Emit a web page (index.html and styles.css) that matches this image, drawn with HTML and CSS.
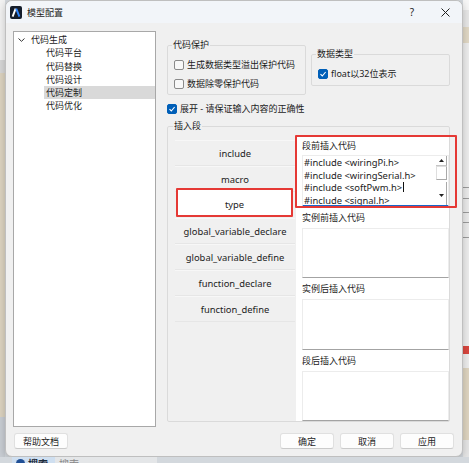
FILE: index.html
```html
<!DOCTYPE html>
<html lang="zh-CN">
<head>
  <meta charset="UTF-8">
  <meta name="viewport" content="width=device-width, initial-scale=1.0">
  <title>模型配置</title>
  <link rel="stylesheet" href="styles.css">
</head>
<body>
  <div class="dialog">
    <!-- Window title bar -->
    <div class="titlebar">
      <svg class="app-icon" width="12" height="13" viewBox="0 0 12 13">
        <rect width="12" height="13" rx="2" fill="#141c2a"/>
        <path d="M2.6 10.6 L5.6 2.6" stroke="#ffffff" stroke-width="1.9" fill="none"/>
        <path d="M6.2 2.6 L9.4 10.6" stroke="#2f86ff" stroke-width="1.9" fill="none"/>
      </svg>
      <span class="title">模型配置</span>
      <span class="tb-btn help">?</span>
      <span class="tb-btn">
        <svg width="9" height="9" viewBox="0 0 9 9">
          <path d="M0.5 0.5 L8.5 8.5 M8.5 0.5 L0.5 8.5" stroke="#1f1f1f" stroke-width="1" fill="none"/>
        </svg>
      </span>
    </div>

    <div class="content">
      <!-- Settings tree -->
      <div class="tree">
        <div class="tree-row">
          <svg class="chevron" width="7" height="4" viewBox="0 0 7 4">
            <path d="M0.5 0.5 L3.5 3.3 L6.5 0.5" stroke="#333" stroke-width="1" fill="none"/>
          </svg>
          代码生成
        </div>
        <div class="tree-row child">代码平台</div>
        <div class="tree-row child">代码替换</div>
        <div class="tree-row child">代码设计</div>
        <div class="tree-row child selected">代码定制</div>
        <div class="tree-row child">代码优化</div>
      </div>

      <div class="main">
        <div class="top-groups">
          <fieldset class="group">
            <legend>代码保护</legend>
            <label class="check-row"><span class="cb"></span>生成数据类型溢出保护代码</label>
            <label class="check-row"><span class="cb"></span>数据除零保护代码</label>
          </fieldset>
          <fieldset class="group group-type">
            <legend>数据类型</legend>
            <label class="check-row">
              <span class="cb on"><svg width="8" height="8" viewBox="0 0 8 8"><path d="M1.5 4.2 L3.3 6 L6.6 2" stroke="#fff" stroke-width="1.1" fill="none"/></svg></span>float以32位表示
            </label>
          </fieldset>
        </div>

        <label class="check-row expand">
          <span class="cb on"><svg width="8" height="8" viewBox="0 0 8 8"><path d="M1.5 4.2 L3.3 6 L6.6 2" stroke="#fff" stroke-width="1.1" fill="none"/></svg></span>展开 - 请保证输入内容的正确性
        </label>

        <fieldset class="group insert">
          <legend>插入段</legend>
          <div class="insert-body">
            <div class="seg-list">
              <div class="seg">include</div>
              <div class="seg">macro</div>
              <div class="seg current">type</div>
              <div class="seg">global_variable_declare</div>
              <div class="seg">global_variable_define</div>
              <div class="seg">function_declare</div>
              <div class="seg">function_define</div>
            </div>

            <div class="code-pane">
              <div class="pane-label first">段前插入代码</div>
              <div class="code-box active">
                <div class="code-lines">
                  <div>#include &lt;wiringPi.h&gt;</div>
                  <div>#include &lt;wiringSerial.h&gt;</div>
                  <div>#include &lt;softPwm.h&gt;<span class="caret"></span></div>
                  <div>#include &lt;signal.h&gt;</div>
                </div>
                <div class="sb">
                  <div class="sb-up"><svg width="5" height="3" viewBox="0 0 5 3"><path d="M0 3 L2.5 0 L5 3Z" fill="#222"/></svg></div>
                  <div class="sb-thumb"></div>
                  <div class="sb-track"></div>
                  <div class="sb-down"><svg width="5" height="3" viewBox="0 0 5 3"><path d="M0 0 L2.5 3 L5 0Z" fill="#222"/></svg></div>
                </div>
              </div>
              <div class="pane-label">实例前插入代码</div>
              <div class="code-box"></div>
              <div class="pane-label">实例后插入代码</div>
              <div class="code-box"></div>
              <div class="pane-label">段后插入代码</div>
              <div class="code-box"></div>
              <div class="mark"></div>
            </div>
          </div>
        </fieldset>
      </div>
    </div>

    <div class="footer">
      <button class="btn">帮助文档</button>
      <span class="spacer"></span>
      <button class="btn">确定</button>
      <button class="btn">取消</button>
      <button class="btn">应用</button>
    </div>
  </div>

  <!-- Taskbar peeking out below the dialog -->
  <div class="taskbar">
    <span class="task-gap"></span>
    <span class="task active"><span class="task-dot"></span>搜索</span>
    <span class="task plain">搜索</span>
  </div>
</body>
</html>
```

FILE: styles.css
```css
* {
  box-sizing: border-box;
}

/* Desktop behind the dialog */
body {
  margin: 0;
  width: 469px;
  height: 463px;
  overflow: hidden;
  font-family: "Noto Sans", "Noto Sans CJK SC", sans-serif;
  font-size: 9px;
  color: #1c1c1c;
  background:
    linear-gradient(#f3f3f3 0 60px, #d8d8d8 60px 73px, #ddd4c1 73px 417px, #c9ced4 417px) left top / 5px 100% no-repeat,
    linear-gradient(#f7f7f7 0 10px, #e8e8e8 10px 27px, #e2d9c6 27px 43px, #eeeeee 43px 187px,
      #9c9c9c 187px 188px, #ececec 188px 198px, #9c9c9c 198px 199px, #ececec 199px 212px,
      #9c9c9c 212px 213px, #ececec 213px 222px, #9c9c9c 222px 223px, #ececec 223px 237px,
      #9c9c9c 237px 238px, #eeeeee 238px 346px, #d9473f 346px 354px, #eeeeee 354px 368px,
      #dfd5c1 368px 440px, #e6e6e6 440px) right top / 6px 100% no-repeat,
    #d4d9de;
}

/* Dialog window */
.dialog {
  margin-left: 5px;
  width: 458px;
  height: 457px;
  display: flex;
  flex-direction: column;
  background: #f0f0f0;
  border: 1px solid #bfbfbf;
  border-radius: 7px;
  box-shadow: 0 2px 8px rgba(0, 0, 0, 0.22);
  overflow: hidden;
}

.titlebar {
  height: 22px;
  flex: none;
  display: flex;
  align-items: center;
  padding: 0 7px 0 4px;
  background: #f2f5f9;
}

.app-icon {
  display: block;
}

.title {
  margin-left: 5px;
  font-size: 9px;
}

.tb-btn {
  width: 20px;
  display: flex;
  justify-content: center;
  align-items: center;
  font-size: 10px;
  color: #222;
}

.tb-btn.help {
  margin-left: auto;
  margin-right: 13px;
}

/* Body: tree on the left, pages on the right */
.content {
  flex: 1;
  display: flex;
  padding: 8px 0 0 7px;
  min-height: 0;
}

.tree {
  width: 143px;
  flex: none;
  background: #ffffff;
  border: 1px solid #a8a8a8;
  padding-top: 1px;
}

.tree-row {
  height: 13.3px;
  line-height: 13.3px;
  display: flex;
  align-items: center;
  padding-left: 4px;
  white-space: nowrap;
}

.chevron {
  margin-right: 6px;
}

.tree-row.child {
  margin-left: 30px;
  padding-left: 2px;
}

.tree-row.selected {
  background: #d9d9d9;
}

.main {
  width: 283px;
  margin-left: 11px;
  padding-top: 8px;
  display: flex;
  flex-direction: column;
}

/* Group boxes */
.group {
  margin: 0;
  min-width: 0;
  border: 1px solid #dadada;
  border-radius: 2px;
  padding: 0 6px 1px 6px;
}

.group legend {
  padding: 0 1px;
  margin-left: -2px;
  line-height: 12px;
}

.top-groups {
  display: grid;
  grid-template-columns: 139px 1fr;
  column-gap: 5px;
  align-items: start;
}

.group .check-row:first-of-type {
  margin-top: 4px;
}

.group-type {
  margin-top: 9px;
  padding-bottom: 2px;
}

.check-row {
  height: 19px;
  display: flex;
  align-items: center;
  gap: 3px;
  white-space: nowrap;
}

.cb {
  width: 10px;
  height: 10px;
  flex: none;
  border: 1px solid #8a8a8a;
  border-radius: 2px;
  background: #f8f8f8;
  display: flex;
  align-items: center;
  justify-content: center;
}

.cb.on {
  background: #005fb8;
  border-color: #005fb8;
}

.expand {
  margin-top: 4px;
}

/* Insert segments */
.insert {
  flex: 1;
  margin-top: 2px;
  margin-bottom: 5px;
  padding: 0 0 0 7px;
  display: flex;
  flex-direction: column;
  min-height: 0;
}

.insert-body {
  flex: 1;
  display: flex;
  min-height: 0;
}

.seg-list {
  width: 120px;
  flex: none;
  margin-top: 8px;
}

.seg {
  height: 26px;
  line-height: 25px;
  text-align: center;
  font-size: 9.4px;
  background: #f0f0f0;
  border-top: 1px solid #f7f7f7;
  border-bottom: 1px solid #e6e6e6;
  white-space: nowrap;
}

.seg.current {
  background: #ffffff;
  border: 2px solid #e53935;
  border-radius: 1px;
  height: 29px;
  line-height: 25px;
  padding-top: 2px;
  margin: -4px 2px 1px 1px;
}

.code-pane {
  flex: 1;
  position: relative;
  margin: 4px 0 0 1px;
  padding-left: 6px;
  background: #ffffff;
  display: flex;
  flex-direction: column;
}

.pane-label {
  height: 21px;
  line-height: 21px;
  flex: none;
}

.pane-label.first {
  height: 19px;
  line-height: 19px;
}

.code-box {
  flex: 1;
  min-height: 0;
  background: #ffffff;
  border: 1px solid #ececec;
  border-bottom-color: #a3a3a3;
}

.code-box.active {
  display: flex;
  overflow: hidden;
  border-bottom: 2px solid #1a66c9;
}

.code-lines {
  flex: 1;
  padding: 1px 0 0 1px;
  font-size: 9.4px;
  line-height: 12.7px;
  white-space: nowrap;
  overflow: hidden;
}

.caret {
  display: inline-block;
  width: 1px;
  height: 10px;
  margin-left: 1px;
  background: #111;
  vertical-align: -1px;
}

/* Old style vertical scrollbar */
.sb {
  width: 11px;
  flex: none;
  margin-right: 1px;
  display: flex;
  flex-direction: column;
}

.sb-up,
.sb-down {
  display: flex;
  align-items: center;
  justify-content: center;
  border-right: 1px solid #a9a9a9;
}

.sb-up {
  height: 10px;
  border-bottom: 1px solid #c6c6c6;
}

.sb-thumb {
  height: 14px;
  border: 1px solid #dedede;
  border-right-color: #a9a9a9;
  border-bottom-color: #a9a9a9;
}

.sb-track {
  height: 2px;
}

.sb-down {
  flex: 1;
  padding-top: 4px;
}

/* Red highlight around the first editor */
.mark {
  position: absolute;
  top: -1px;
  left: -1px;
  width: 162px;
  height: 73px;
  border: 2px solid #e53935;
  border-radius: 1px;
  pointer-events: none;
}

/* Bottom buttons */
.footer {
  height: 29px;
  flex: none;
  display: flex;
  gap: 6px;
  padding: 6px 8px 0 8px;
}

.spacer {
  flex: 1;
}

.btn {
  width: 54px;
  height: 16px;
  padding: 0;
  font-family: inherit;
  font-size: 9px;
  color: #1c1c1c;
  background: #fdfdfd;
  border: 1px solid #e0e0e0;
  border-bottom-color: #cbcbcb;
  border-radius: 3px;
}

/* Taskbar strip */
.taskbar {
  height: 6px;
  display: flex;
  overflow: hidden;
  background: #d3d8dd;
}

.task-gap {
  width: 12px;
}

.task {
  display: flex;
  align-items: flex-start;
  gap: 3px;
  padding: 1px 0 0 4px;
  font-size: 10px;
  line-height: 12px;
}

.task.active {
  width: 43px;
  background: #cfdff0;
  font-weight: bold;
  color: #1b2a3a;
}

.task-dot {
  width: 9px;
  height: 9px;
  margin-top: 1px;
  border-radius: 50%;
  background: #1f4f95;
}

.task.plain {
  width: 102px;
  background: #e4e6e8;
  color: #888;
}
```
